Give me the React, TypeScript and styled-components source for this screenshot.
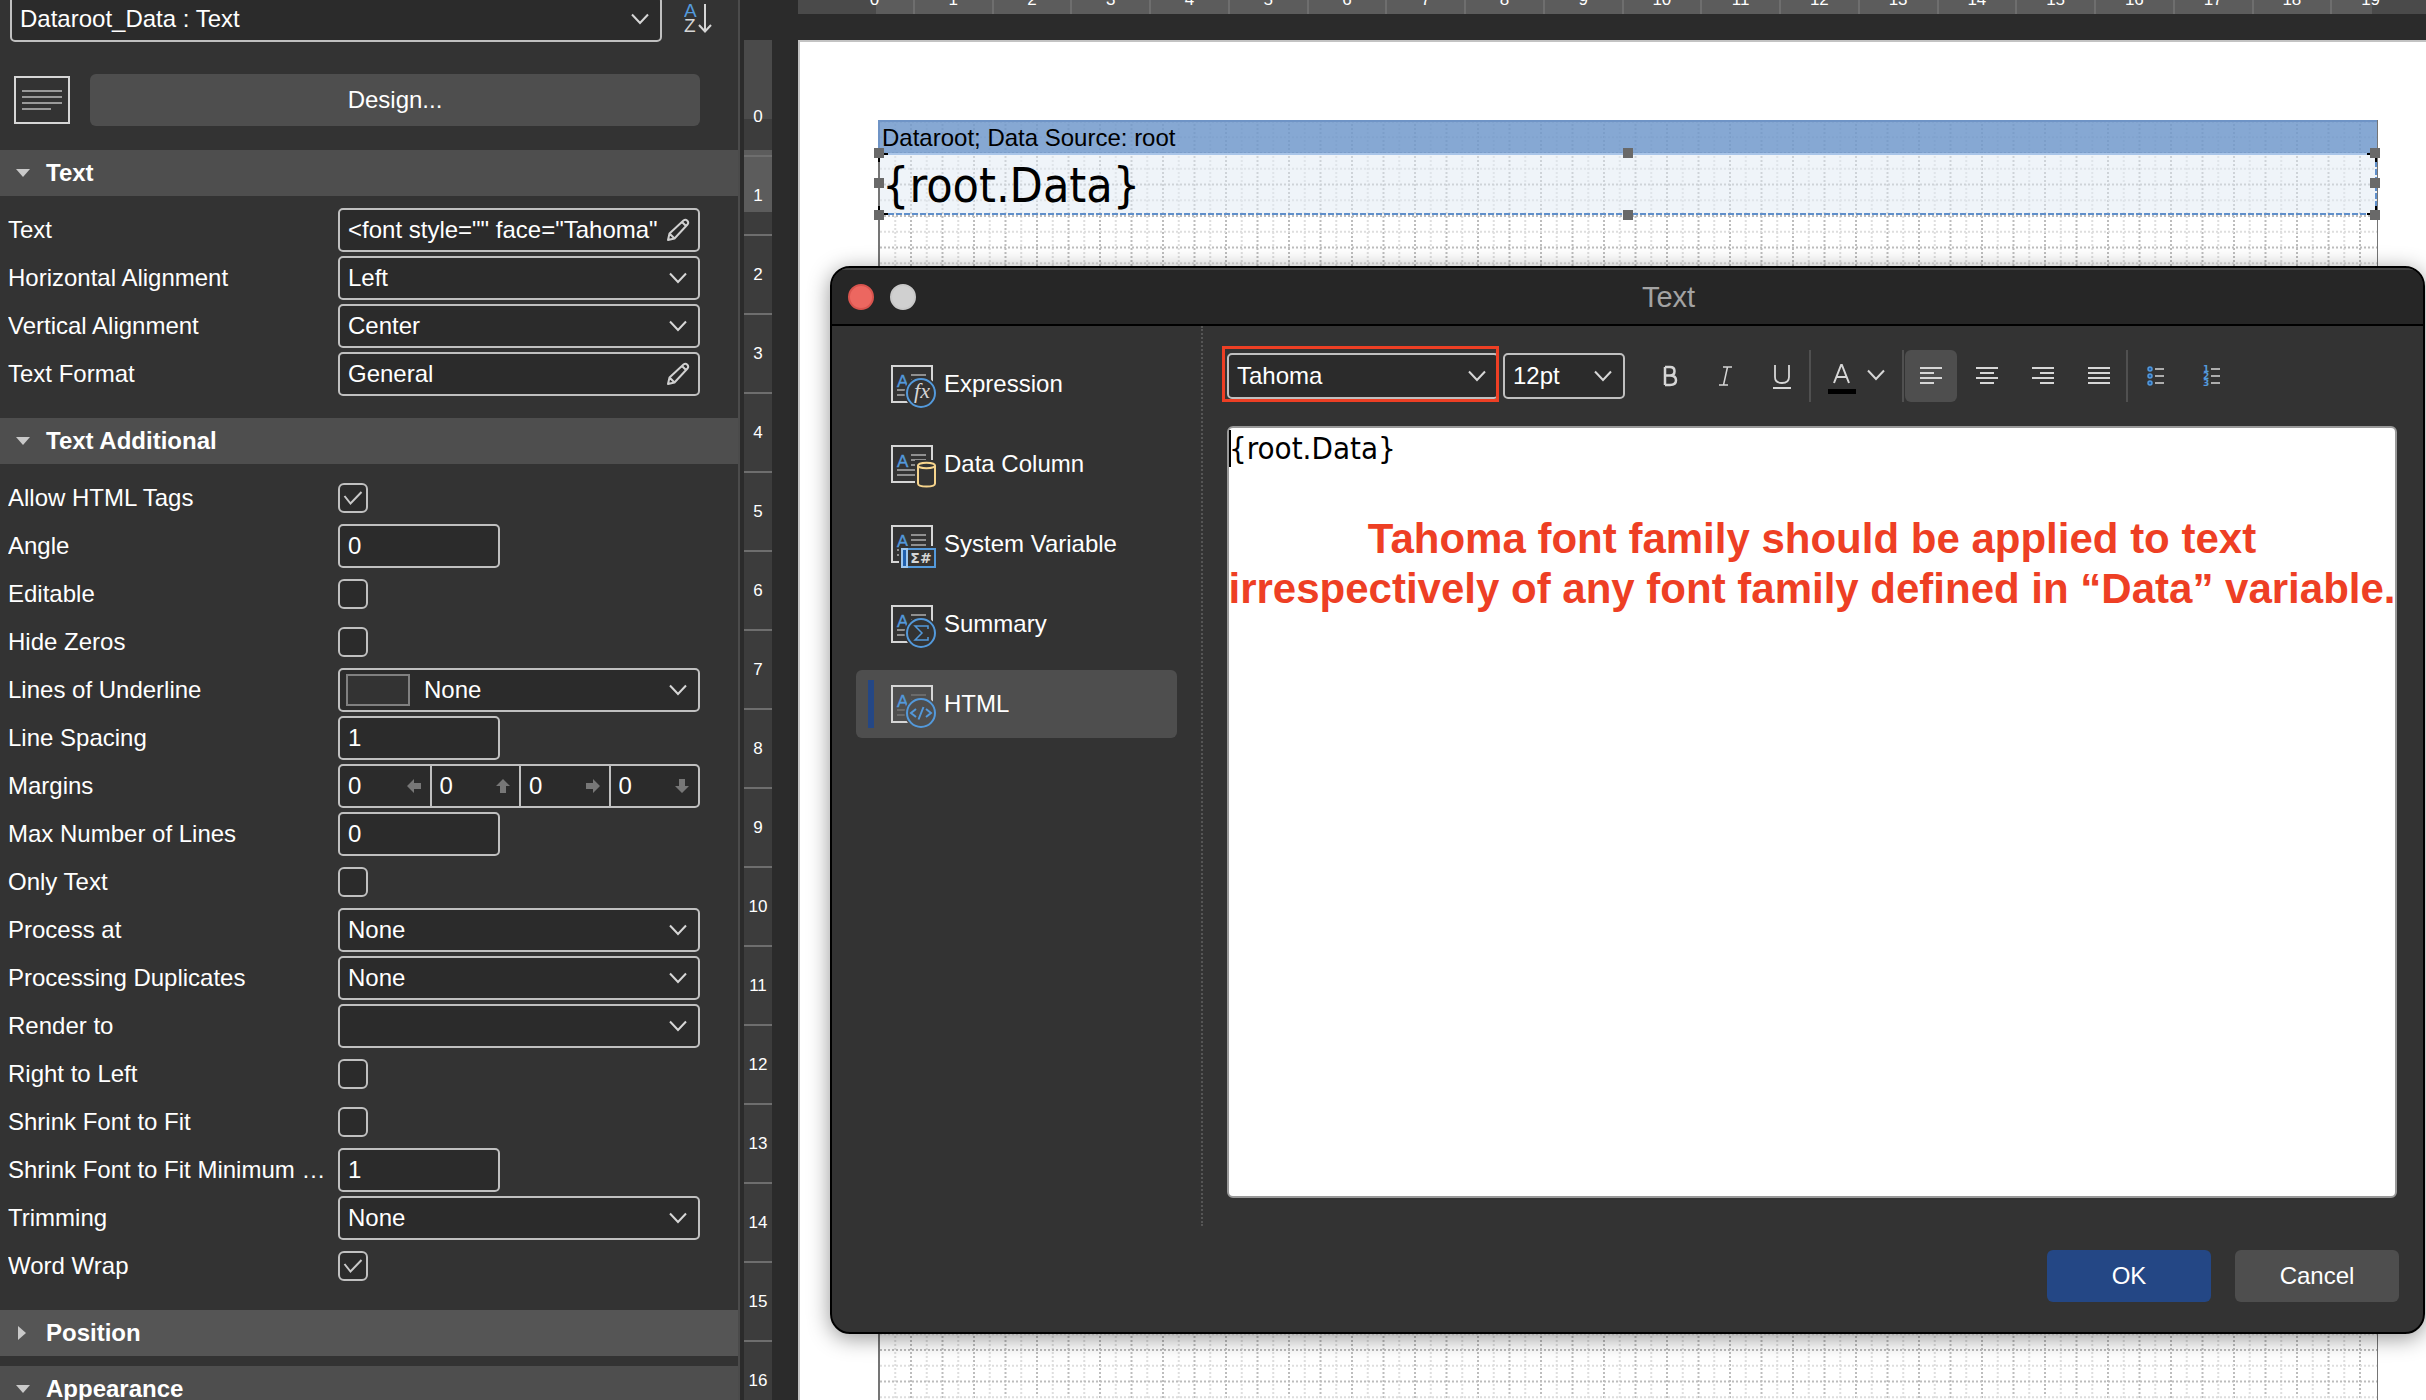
import React, { useId } from 'react';
import styled, { createGlobalStyle } from 'styled-components';

const GlobalStyle = createGlobalStyle`
  *, *::before, *::after { box-sizing: border-box; }
  body {
    margin: 0;
    background: #2b2b2b;
    color: #fff;
    font: 24px/28px "Liberation Sans", Arial, Helvetica, sans-serif;
  }
  button, input, select, textarea { font: inherit; color: inherit; margin: 0; }
  svg { display: block; flex: none; }
`;

const LINE = '#c0c0c0';
const BLUE = '#5399db';
const tahoma = '"DejaVu Sans Condensed", "Noto Sans", sans-serif';

/* ---------- shell ---------- */

const Shell = styled.div`
  display: flex;
  height: 100vh;
  overflow: hidden;
`;

const Sidebar = styled.aside`
  flex: none;
  width: 740px;
  margin-top: -4px;
  background: #333;
  border-right: 2px solid #4b4b4b;
  overflow: hidden;
`;

const TopRow = styled.div`
  display: flex;
  align-items: center;
  gap: 22px;
  padding-left: 10px;
`;

const DesignRow = styled.div`
  display: flex;
  align-items: center;
  gap: 20px;
  padding: 32px 38px 24px 14px;
`;

const Button = styled.button<{ $primary?: boolean; $grow?: boolean }>`
  flex: ${p => (p.$grow ? '1' : 'none')};
  width: 164px;
  height: 52px;
  border: 0;
  border-radius: 6px;
  background: ${p => (p.$primary ? '#244785' : '#4e4e4e')};
  text-align: center;
  padding: 0;
`;

const PlainButton = styled.button`
  display: flex;
  align-items: center;
  justify-content: center;
  border: 0;
  padding: 0;
  background: none;
`;

/* ---------- property grid ---------- */

const SectionHeader = styled.button<{ $hover?: boolean }>`
  display: flex;
  align-items: center;
  gap: 14px;
  width: 100%;
  height: 46px;
  padding: 0 14px;
  border: 0;
  background: ${p => (p.$hover ? '#555' : '#4e4e4e')};
  font-weight: bold;
  text-align: left;
`;

const Rows = styled.div`
  padding: 10px 38px 20px 8px;
`;

const Gap = styled.div`
  height: 10px;
`;

const Row = styled.div`
  display: grid;
  grid-template-columns: 330px 1fr;
  align-items: center;
  height: 48px;
`;

const Label = styled.label`
  padding-right: 10px;
  overflow: hidden;
  text-overflow: ellipsis;
  white-space: nowrap;
`;

const Field = styled.div<{ $width?: string; $height?: number }>`
  display: grid;
  grid-template-columns: 1fr auto;
  align-items: center;
  width: ${p => p.$width ?? '100%'};
  height: ${p => p.$height ?? 44}px;
  border: 2px solid ${LINE};
  border-radius: 5px;
  background: #2b2b2b;
  overflow: hidden;
`;

const Select = styled.select<{ $indent?: number }>`
  grid-area: 1 / 1 / 2 / 3;
  width: 100%;
  height: 100%;
  padding: 0 44px 0 ${p => p.$indent ?? 8}px;
  border: 0;
  background: none;
  appearance: none;
  outline: none;
  option { background: #2b2b2b; }
`;

const FieldIcon = styled.span`
  grid-area: 1 / 2;
  display: flex;
  padding-right: 11px;
  pointer-events: none;
`;

const Swatch = styled.span`
  grid-area: 1 / 1;
  width: 64px;
  height: 32px;
  margin-left: 6px;
  border: 2px solid #808080;
  background: #333;
  pointer-events: none;
`;

const TextInput = styled.input`
  width: 100%;
  min-width: 0;
  height: 100%;
  padding: 0 0 0 8px;
  border: 0;
  background: none;
  outline: none;
`;

const EditButton = styled(PlainButton)`
  width: 40px;
  height: 40px;
`;

const Margins = styled.div`
  display: grid;
  grid-template-columns: repeat(4, 1fr);
  height: 44px;
  border: 2px solid ${LINE};
  border-radius: 5px;
  background: #2b2b2b;
`;

const MarginCell = styled.span`
  display: flex;
  align-items: center;
  padding-right: 9px;
  & + & { border-left: 2px solid ${LINE}; }
`;

const Check = styled.input`
  appearance: none;
  width: 30px;
  height: 30px;
  border: 2px solid ${LINE};
  border-radius: 6px;
  background: #2b2b2b;
  grid-area: 1 / 1;
`;

const CheckBox = styled.span`
  display: grid;
  place-items: center;
  width: 30px;
  height: 30px;
  svg { grid-area: 1 / 1; pointer-events: none; }
`;

/* ---------- icons ---------- */

const Chevron = () => (
  <svg width="18" height="12" viewBox="0 0 18 12" fill="none" stroke="#d6d6d6" strokeWidth="2">
    <path d="M1 1.5 9 10 17 1.5" />
  </svg>
);

const Pencil = () => (
  <svg width="24" height="24" viewBox="0 0 24 24" fill="none" stroke="#d0d0d0" strokeWidth="2" strokeLinejoin="round">
    <path d="M2 22 3.5 15.5 17.5 2.5Q19.5 1 21.3 2.8 23 4.6 21.5 6.5L8.5 20.5ZM3.5 15.5 8.5 20.5M16 4 20 8" />
  </svg>
);

const Triangle = ({ open }: { open?: boolean }) => (
  <svg width="18" height="18" viewBox="0 0 18 18" fill="#c9c9c9">
    <path d={open ? 'M2 5h14L9 13z' : 'M4 2v14l8-7z'} />
  </svg>
);

const Tick = () => (
  <svg width="20" height="16" viewBox="0 0 20 16" fill="none" stroke="#c9c9c9" strokeWidth="2">
    <path d="M1.500 6 7.500 13.500 18.500 2" />
  </svg>
);

const Arrow = ({ turn }: { turn: number }) => (
  <svg width="14" height="14" viewBox="0 0 14 14" fill="#777">
    <path d="M0 7 7 0V4H14V10H7V14z" transform={`rotate(${turn} 7 7)`} />
  </svg>
);

const SortIcon = () => (
  <svg width="30" height="32" viewBox="0 0 30 32">
    <text x="0" y="14" fontSize="19" fill={BLUE}>A</text>
    <text x="0" y="29" fontSize="19" fill="#d6d6d6">Z</text>
    <path d="M21 1V28M15 22 21 28.500 27 22" fill="none" stroke="#d6d6d6" strokeWidth="2" />
  </svg>
);

const TextBoxIcon = () => (
  <svg width="56" height="48" viewBox="0 0 56 48" fill="none" strokeWidth="2">
    <rect x="1" y="1" width="54" height="46" stroke="#d6d6d6" />
    <path d="M8 15H48M8 21H48M8 27H48M8 33H37" stroke="#9a9a9a" />
  </svg>
);

type Kind = 'fx' | 'data' | 'system' | 'sum' | 'html';

const NavIcon = ({ kind, bg }: { kind: Kind; bg: string }) => {
  const round = kind === 'fx' || kind === 'sum' || kind === 'html';
  const gray = kind === 'html' ? '#6a6a6a' : '#8f8f8f';
  return (
    <svg width="46" height="48" viewBox="0 0 46 48" fill="none" strokeWidth="2">
      <rect x="1" y="6" width="40" height="36" stroke="#d6d6d6" />
      <text x="6" y="27" fontSize="17" fill={BLUE} stroke={BLUE} strokeWidth="0.4">A</text>
      <path d="M20 15H35M20 20H35M20 25H35M6 30H24M6 35H24" stroke={gray} />
      {round && <circle cx="30" cy="33" r="16.500" fill={bg} />}
      {round && <circle cx="30" cy="33" r="14" stroke={BLUE} />}
      {kind === 'fx' && (
        <text x="31" y="38" fontSize="22" fontStyle="italic" fontFamily="Liberation Serif, serif" textAnchor="middle" fill="#d6d6d6">fx</text>
      )}
      {kind === 'sum' && <path d="M37 29V26H24L31 33 24 40H37V37" stroke={BLUE} strokeWidth="1.500" />}
      {kind === 'html' && <path d="M25 29 20 33 25 37M35 29 40 33 35 37M32.500 27 27.500 39.500" stroke={BLUE} />}
      {kind === 'data' && (
        <g>
          <rect x="24" y="20" width="24" height="28" fill={bg} />
          <path d="M27 25.500V43.500C27 47.500 44 47.500 44 43.500V25.500" stroke="#f6d48c" />
          <ellipse cx="35.500" cy="25.500" rx="8.500" ry="2.800" stroke="#f6d48c" />
        </g>
      )}
      {kind === 'system' && (
        <g>
          <rect x="8" y="26" width="38" height="22" fill={bg} />
          <rect x="11" y="29" width="33" height="18" stroke={BLUE} />
          <rect x="11" y="29" width="5" height="18" stroke="#9cc6ee" fill="#1f5fae" />
          <text x="30" y="43" fontSize="14" fontWeight="bold" fontFamily="DejaVu Sans, sans-serif" textAnchor="middle" fill="#d6d6d6">Σ#</text>
        </g>
      )}
    </svg>
  );
};

const glyphs: Record<string, React.ReactNode> = {
  bold: <path d="M9 5V23M9 5H14Q18.500 5 18.500 9.200 18.500 13.500 14 13.500H9M14 13.500Q20 13.500 20 18.300 20 23 14 23H9" strokeWidth="2.500" />,
  italic: <path d="M11 5H20M7 23H16M15.500 5 11.500 23" strokeWidth="1.500" />,
  underline: <path d="M7 3V15Q7 21 14 21 21 21 21 15V3M5 26H23" strokeWidth="1.800" />,
  left: <path d="M3 6H25M3 11H17M3 16H25M3 21H17" strokeWidth="2" />,
  center: <path d="M3 6H25M7 11H21M3 16H25M7 21H21" strokeWidth="2" />,
  right: <path d="M3 6H25M11 11H25M3 16H25M11 21H25" strokeWidth="2" />,
  justify: <path d="M3 6H25M3 11H25M3 16H25M3 21H25" strokeWidth="2" />,
  bullets: (
    <g>
      <path d="M14 7H23M14 14H23M14 21H23" strokeWidth="1.500" />
      <g fill="#1f5fae" stroke={BLUE} strokeWidth="1.500">
        <circle cx="9" cy="7" r="2" /><circle cx="9" cy="14" r="2" /><circle cx="9" cy="21" r="2" />
      </g>
    </g>
  ),
  numbers: (
    <g>
      <path d="M14 7H23M14 14H23M14 21H23" strokeWidth="1.500" />
      <g fill={BLUE} stroke="none" fontSize="9" fontWeight="bold" fontFamily="DejaVu Sans, sans-serif">
        <text x="6" y="10">1</text><text x="6" y="17">2</text><text x="6" y="24">3</text>
      </g>
    </g>
  ),
};

const ToolGlyph = ({ name }: { name: string }) => (
  <svg width="28" height="28" viewBox="0 0 28 28" fill="none" stroke="#d6d6d6">{glyphs[name]}</svg>
);

const ColorGlyph = () => (
  <svg width="28" height="30" viewBox="0 0 28 30" fill="none">
    <path d="M6 19 13.500 0 21 19M8.500 13H18.500" stroke="#d6d6d6" strokeWidth="2" />
    <rect y="25" width="28" height="5" fill="#000" />
  </svg>
);

/* ---------- property rows ---------- */

type Prop =
  | { kind: 'select'; label: string; value: string; swatch?: boolean }
  | { kind: 'edit' | 'number'; label: string; value: string }
  | { kind: 'check'; label: string; on?: boolean }
  | { kind: 'margins'; label: string };

const textProps: Prop[] = [
  { kind: 'edit', label: 'Text', value: '<font style="" face="Tahoma"' },
  { kind: 'select', label: 'Horizontal Alignment', value: 'Left' },
  { kind: 'select', label: 'Vertical Alignment', value: 'Center' },
  { kind: 'edit', label: 'Text Format', value: 'General' },
];

const additionalProps: Prop[] = [
  { kind: 'check', label: 'Allow HTML Tags', on: true },
  { kind: 'number', label: 'Angle', value: '0' },
  { kind: 'check', label: 'Editable' },
  { kind: 'check', label: 'Hide Zeros' },
  { kind: 'select', label: 'Lines of Underline', value: 'None', swatch: true },
  { kind: 'number', label: 'Line Spacing', value: '1' },
  { kind: 'margins', label: 'Margins' },
  { kind: 'number', label: 'Max Number of Lines', value: '0' },
  { kind: 'check', label: 'Only Text' },
  { kind: 'select', label: 'Process at', value: 'None' },
  { kind: 'select', label: 'Processing Duplicates', value: 'None' },
  { kind: 'select', label: 'Render to', value: '' },
  { kind: 'check', label: 'Right to Left' },
  { kind: 'check', label: 'Shrink Font to Fit' },
  { kind: 'number', label: 'Shrink Font to Fit Minimum Size', value: '1' },
  { kind: 'select', label: 'Trimming', value: 'None' },
  { kind: 'check', label: 'Word Wrap', on: true },
];

const PropRow = ({ prop }: { prop: Prop }) => {
  const id = useId();
  return (
    <Row>
      <Label htmlFor={id}>{prop.label}</Label>
      {prop.kind === 'select' && (
        <Field>
          {prop.swatch && <Swatch />}
          <Select id={id} $indent={prop.swatch ? 84 : 8}><option>{prop.value}</option></Select>
          <FieldIcon><Chevron /></FieldIcon>
        </Field>
      )}
      {prop.kind === 'edit' && (
        <Field>
          <TextInput id={id} defaultValue={prop.value} />
          <EditButton aria-label={`Edit ${prop.label}`}><Pencil /></EditButton>
        </Field>
      )}
      {prop.kind === 'number' && (
        <Field $width="162px"><TextInput id={id} defaultValue={prop.value} /></Field>
      )}
      {prop.kind === 'check' && (
        <CheckBox>
          <Check type="checkbox" id={id} defaultChecked={prop.on} />
          {prop.on && <Tick />}
        </CheckBox>
      )}
      {prop.kind === 'margins' && (
        <Margins>
          {['Left', 'Top', 'Right', 'Bottom'].map((side, i) => (
            <MarginCell key={side}>
              <TextInput id={i === 0 ? id : undefined} aria-label={`${side} margin`} defaultValue="0" />
              <Arrow turn={i * 90} />
            </MarginCell>
          ))}
        </Margins>
      )}
    </Row>
  );
};

/* ---------- canvas ---------- */

const Workspace = styled.main`
  position: relative;
  flex: 1;
  min-width: 0;
  display: flex;
  gap: 26px;
  padding-left: 4px;
`;

const VRuler = styled.div`
  flex: none;
  width: 28px;
  margin-top: 40px;
  padding-top: 38px;
  overflow: hidden;
  background: linear-gradient(#4a4a4a 79px, #3c3c3c 79px 110px, #5c5c5c 110px 172px, #3c3c3c 172px);
  font-size: 17px;
`;

const VMark = styled.div`
  display: flex;
  align-items: center;
  justify-content: center;
  height: 79px;
  border-bottom: 2px solid #6e6e6e;
`;

const Column = styled.div`
  flex: 1;
  min-width: 0;
  display: flex;
  flex-direction: column;
`;

const HRuler = styled.div`
  flex: none;
  display: flex;
  height: 28px;
  margin: -14px 0 26px;
  padding: 0 15px 0 38px;
  background: linear-gradient(to left, #4a4a4a 54px, transparent 54px),
    linear-gradient(to right, #4a4a4a 78px, #5c5c5c 78px);
  font-size: 17px;
`;

const HMark = styled.div`
  flex: 1;
  display: flex;
  align-items: center;
  justify-content: center;
  border-right: 2px solid #6e6e6e;
  &:last-child { border-color: transparent; }
`;

const Page = styled.div`
  flex: 1;
  display: flex;
  padding: 78px 48px 0 78px;
  background: #fff;
  border: solid #c3c3c3;
  border-width: 2px 0 0 2px;
`;

const PrintArea = styled.div`
  position: relative;
  flex: 1;
  min-width: 0;
  color: #000;
  border: solid #757575;
  border-width: 0 1px 0 2px;
`;

const GridSvg = styled.svg`
  position: absolute;
  inset: 0;
  width: 100%;
  height: 100%;
`;

const BandHeader = styled.div`
  position: relative;
  height: 33px;
  padding: 2px 2px 0;
  margin-left: -2px;
  border: solid #6f94c6;
  border-width: 2px 0 0 2px;
  background: rgba(113, 153, 203, 0.85);
  white-space: nowrap;
`;

const TextBand = styled.div`
  position: relative;
  height: 62px;
  padding-left: 2px;
  background:
    repeating-linear-gradient(to right, #5f8fcb 0 6px, transparent 6px 8px) bottom / 100% 2px no-repeat,
    repeating-linear-gradient(#5f8fcb 0 6px, transparent 6px 8px) right / 2px 100% no-repeat,
    linear-gradient(#a9c5e8, #a9c5e8) top / 100% 2px no-repeat,
    rgba(223, 233, 243, 0.5);
  font: 48px/64px ${tahoma};
`;

const Handle = styled.i<{ $x: 'left' | 'mid' | 'right'; $y: 'top' | 'mid' | 'bottom' }>`
  position: absolute;
  width: 10px;
  height: 10px;
  background: #696969;
  left: ${p => ({ left: '-6px', mid: 'calc(50% - 6px)', right: 'calc(100% - 7px)' })[p.$x]};
  top: ${p => ({ top: '-5px', mid: '25px', bottom: '57px' })[p.$y]};
`;

const Corner = styled.i<{ $right?: boolean; $bottom?: boolean }>`
  position: absolute;
  width: 10px;
  height: 9px;
  border: 0 solid #000;
  ${p => (p.$right ? 'right: 0; border-right-width: 2px;' : 'left: -2px; border-left-width: 2px;')}
  ${p => (p.$bottom ? 'bottom: 0; border-bottom-width: 2px;' : 'top: 0; border-top-width: 2px;')}
`;

const STEP = 15.75;

const Grid = () => (
  <GridSvg aria-hidden="true" strokeWidth="2" strokeDasharray="2 2">
    {Array.from({ length: 94 }, (_, i) => (
      <line key={`v${i}`} x1={15.25 + STEP * i} x2={15.25 + STEP * i} y1="0" y2="1400" stroke={i % 2 ? '#bdbdbd' : '#dedede'} />
    ))}
    {Array.from({ length: 82 }, (_, i) => (
      <line key={`h${i}`} y1={1.5 + STEP * i} y2={1.5 + STEP * i} x1="0" x2="1600" stroke={i % 2 ? '#dedede' : '#bdbdbd'} />
    ))}
  </GridSvg>
);

/* ---------- dialog ---------- */

const Dialog = styled.section`
  position: absolute;
  left: 90px;
  right: 1px;
  top: 266px;
  border-radius: 20px;
  box-shadow: 0 4px 22px rgba(0, 0, 0, 0.42);
`;

const DialogFrame = styled.div`
  border: 2px solid #000;
  border-radius: 20px;
  background: #333;
  overflow: hidden;
`;

const TitleBar = styled.header`
  display: flex;
  align-items: center;
  gap: 16px;
  height: 58px;
  padding: 0 18px 0 16px;
  border-top: 2px solid #444;
  border-bottom: 2px solid #000;
  background: #262626;
`;

const Light = styled.button<{ $color: string; $ring: string }>`
  width: 26px;
  height: 26px;
  padding: 0;
  border: 2px solid ${p => p.$ring};
  border-radius: 50%;
  background: ${p => p.$color};
`;

const Title = styled.h1`
  flex: 1;
  margin: 0;
  font-size: 29px;
  line-height: 32px;
  font-weight: normal;
  color: #a3a3a3;
  text-align: center;
`;

const DialogBody = styled.div`
  display: flex;
  height: 900px;
`;

const Nav = styled.nav`
  flex: none;
  display: flex;
  flex-direction: column;
  gap: 12px;
  width: 371px;
  padding: 24px 24px 0;
  border-right: 2px dotted #555;
`;

const NavItem = styled.button<{ $active?: boolean }>`
  display: flex;
  align-items: center;
  gap: 7px;
  height: 68px;
  padding: 0 0 0 12px;
  border: 0;
  border-radius: 6px;
  background: ${p => (p.$active ? '#4e4e4e' : 'transparent')};
  text-align: left;
  &::before {
    content: '';
    width: 6px;
    height: 48px;
    margin-right: 10px;
    background: ${p => (p.$active ? '#244785' : 'transparent')};
  }
`;

const EditorPane = styled.div`
  flex: 1;
  min-width: 0;
  padding: 20px 26px 0 19px;
`;

const Toolbar = styled.div`
  display: flex;
  align-items: center;
  gap: 4px;
  height: 60px;
`;

const FontFrame = styled.div`
  position: relative;
  flex: none;
  align-self: flex-start;
  width: 277px;
  height: 56px;
  padding: 7px 0 0 5px;
  &::after {
    content: '';
    position: absolute;
    inset: 0;
    border: 3px solid #ee3f24;
    pointer-events: none;
  }
`;

const SizeField = styled.div`
  flex: none;
  width: 137px;
  padding-right: 15px;
`;

const ToolButton = styled(PlainButton)<{ $active?: boolean }>`
  flex: none;
  width: 52px;
  height: 52px;
  border-radius: 6px;
  background: ${p => (p.$active ? '#4e4e4e' : 'none')};
`;

const ColorButton = styled(PlainButton)`
  justify-content: flex-start;
  gap: 11px;
  width: 89px;
  height: 52px;
  padding: 6px 0 0 16px;
  svg:last-child { margin-bottom: 8px; }
`;

const Divider = styled.span`
  width: 2px;
  height: 52px;
  margin: 0 -3px;
  background: #505050;
`;

const EditorBox = styled.div`
  position: relative;
  height: 772px;
  margin: 20px 0 0 5px;
`;

const Editor = styled.textarea`
  display: block;
  width: 100%;
  height: 100%;
  padding: 1px 0 0;
  border: 2px solid #999;
  border-radius: 6px;
  background: #fff;
  color: #000;
  font: 31px/38px ${tahoma};
  resize: none;
  outline: none;
`;

const Caret = styled.i`
  position: absolute;
  left: 2px;
  top: 4px;
  width: 2px;
  height: 37px;
  background: #000;
`;

const Annotation = styled.p`
  position: absolute;
  inset: 88px 0 auto;
  margin: 0;
  color: #ee3f24;
  font-size: 42px;
  line-height: 50px;
  font-weight: bold;
  text-align: center;
  white-space: nowrap;
  pointer-events: none;
`;

const Footer = styled.footer`
  display: flex;
  justify-content: flex-end;
  gap: 24px;
  padding: 24px 24px 30px;
`;

const navItems: { kind: Kind; label: string }[] = [
  { kind: 'fx', label: 'Expression' },
  { kind: 'data', label: 'Data Column' },
  { kind: 'system', label: 'System Variable' },
  { kind: 'sum', label: 'Summary' },
  { kind: 'html', label: 'HTML' },
];

const TextDialog = () => (
  <Dialog role="dialog" aria-label="Text">
    <DialogFrame>
      <TitleBar>
        <Light aria-label="Close" $color="#ec6760" $ring="#d9544e" />
        <Light aria-label="Minimize" $color="#d0d0d0" $ring="#c8c8c8" />
        <Title>Text</Title>
      </TitleBar>
      <DialogBody>
        <Nav>
          {navItems.map(({ kind, label }) => {
            const active = kind === 'html';
            return (
              <NavItem key={kind} $active={active}>
                <NavIcon kind={kind} bg={active ? '#4e4e4e' : '#333'} />
                {label}
              </NavItem>
            );
          })}
        </Nav>
        <EditorPane>
          <Toolbar>
            <FontFrame>
              <Field $height={46}>
                <Select aria-label="Font family"><option>Tahoma</option></Select>
                <FieldIcon><Chevron /></FieldIcon>
              </Field>
            </FontFrame>
            <SizeField>
              <Field $height={46}>
                <Select aria-label="Font size"><option>12pt</option></Select>
                <FieldIcon><Chevron /></FieldIcon>
              </Field>
            </SizeField>
            <ToolButton aria-label="Bold"><ToolGlyph name="bold" /></ToolButton>
            <ToolButton aria-label="Italic"><ToolGlyph name="italic" /></ToolButton>
            <ToolButton aria-label="Underline"><ToolGlyph name="underline" /></ToolButton>
            <Divider />
            <ColorButton aria-label="Font color"><ColorGlyph /><Chevron /></ColorButton>
            <Divider />
            <ToolButton aria-label="Align left" $active><ToolGlyph name="left" /></ToolButton>
            <ToolButton aria-label="Align center"><ToolGlyph name="center" /></ToolButton>
            <ToolButton aria-label="Align right"><ToolGlyph name="right" /></ToolButton>
            <ToolButton aria-label="Justify"><ToolGlyph name="justify" /></ToolButton>
            <Divider />
            <ToolButton aria-label="Bulleted list"><ToolGlyph name="bullets" /></ToolButton>
            <ToolButton aria-label="Numbered list"><ToolGlyph name="numbers" /></ToolButton>
          </Toolbar>
          <EditorBox>
            <Editor aria-label="HTML text" defaultValue="{root.Data}" spellCheck={false} />
            <Caret />
            <Annotation>
              Tahoma font family should be applied to text<br />
              irrespectively of any font family defined in “Data” variable.
            </Annotation>
          </EditorBox>
        </EditorPane>
      </DialogBody>
      <Footer>
        <Button $primary>OK</Button>
        <Button>Cancel</Button>
      </Footer>
    </DialogFrame>
  </Dialog>
);

export default function App() {
  return (
    <Shell>
      <GlobalStyle />
      <Sidebar>
        <TopRow>
          <Field $width="652px" $height={46}>
            <Select aria-label="Selected component"><option>Dataroot_Data : Text</option></Select>
            <FieldIcon><Chevron /></FieldIcon>
          </Field>
          <PlainButton aria-label="Sort alphabetically"><SortIcon /></PlainButton>
        </TopRow>
        <DesignRow>
          <TextBoxIcon />
          <Button $grow>Design...</Button>
        </DesignRow>
        <SectionHeader><Triangle open />Text</SectionHeader>
        <Rows>{textProps.map(p => <PropRow key={p.label} prop={p} />)}</Rows>
        <SectionHeader><Triangle open />Text Additional</SectionHeader>
        <Rows>{additionalProps.map(p => <PropRow key={p.label} prop={p} />)}</Rows>
        <SectionHeader $hover><Triangle />Position</SectionHeader>
        <Gap />
        <SectionHeader><Triangle open />Appearance</SectionHeader>
      </Sidebar>
      <Workspace>
        <VRuler>
          {Array.from({ length: 17 }, (_, i) => <VMark key={i}>{i}</VMark>)}
        </VRuler>
        <Column>
          <HRuler>
            {Array.from({ length: 20 }, (_, i) => <HMark key={i}>{i}</HMark>)}
          </HRuler>
          <Page>
            <PrintArea>
              <Grid />
              <BandHeader>Dataroot; Data Source: root</BandHeader>
              <TextBand>
                {'{root.Data}'}
                <Corner /><Corner $right /><Corner $bottom /><Corner $right $bottom />
                <Handle $x="left" $y="top" /><Handle $x="mid" $y="top" /><Handle $x="right" $y="top" />
                <Handle $x="left" $y="mid" /><Handle $x="right" $y="mid" />
                <Handle $x="left" $y="bottom" /><Handle $x="mid" $y="bottom" /><Handle $x="right" $y="bottom" />
              </TextBand>
            </PrintArea>
          </Page>
        </Column>
        <TextDialog />
      </Workspace>
    </Shell>
  );
}
